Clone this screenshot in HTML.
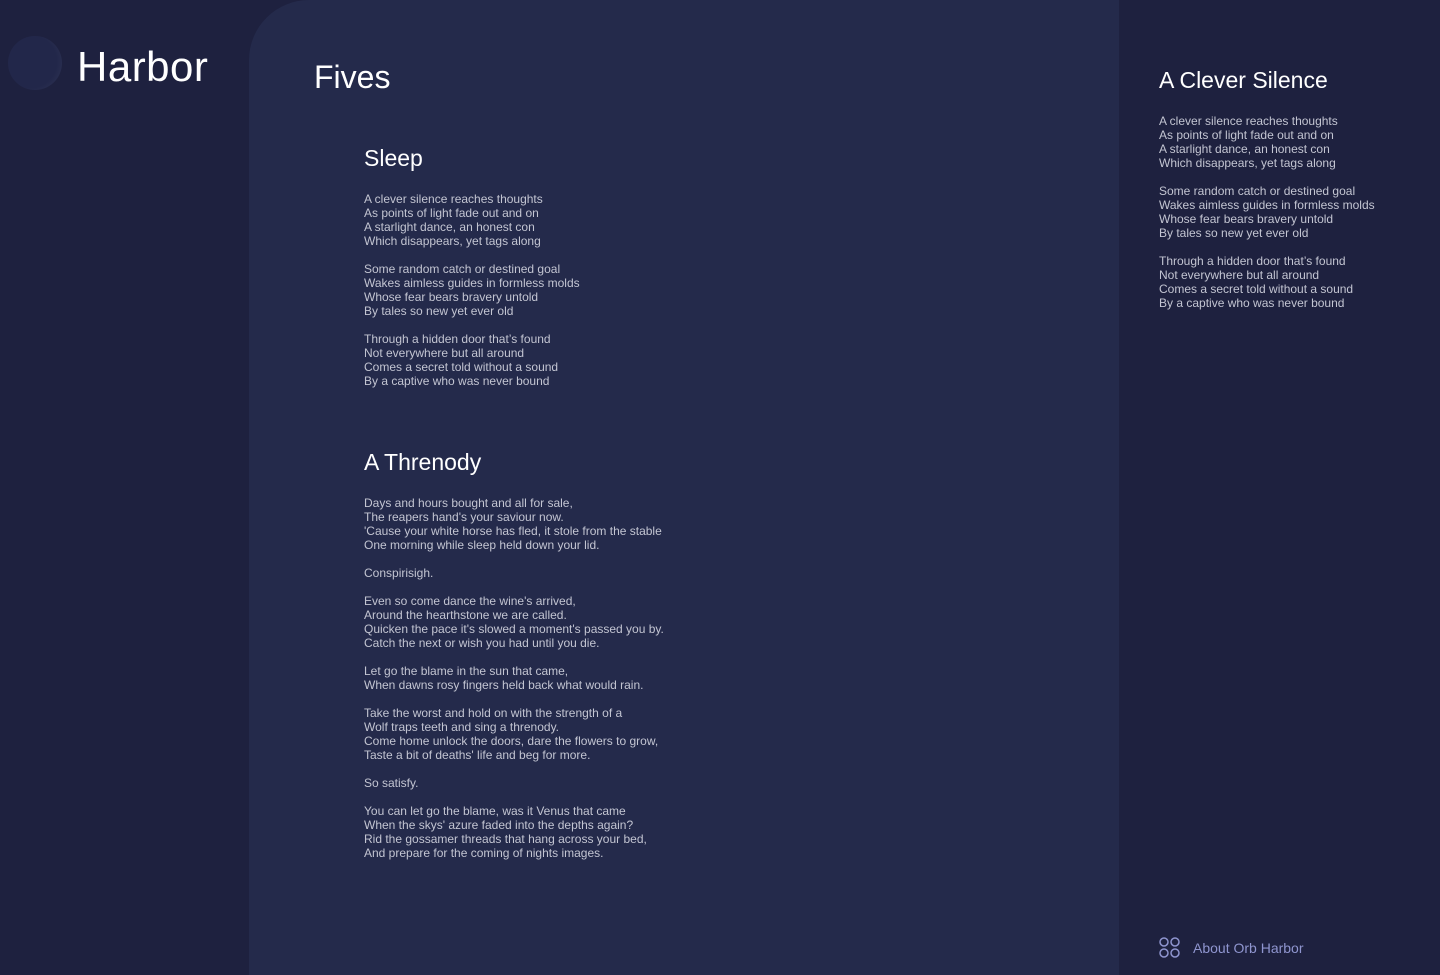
<!DOCTYPE html>
<html><head><meta charset="utf-8"><style>
*{margin:0;padding:0;box-sizing:border-box}
body{width:1440px;height:975px;background:#1e213f;font-family:"Liberation Sans",sans-serif;overflow:hidden;position:relative}
.logo{position:absolute;left:8px;top:36px;width:54px;height:54px;border-radius:50%;background:radial-gradient(circle at 42% 48%,#22274a 62%,#2c3152 84%,#4e5575 97%,#1e213f 100%)}
.brand{position:absolute;left:77px;top:43px;font-size:42px;color:#fff;letter-spacing:0.5px}
.main{position:absolute;left:249px;top:0;width:870px;height:975px;background:#242a4b;border-top-left-radius:60px}
h1{position:absolute;left:65px;top:59px;font-size:32px;font-weight:normal;color:#fff}
h2{font-size:23px;font-weight:normal;color:#fff}
p{font-size:12px;line-height:14px;color:#c3c5d2;margin-top:14px}
.poem{position:absolute;left:115px}
.poem h2{margin-bottom:20px}
.side{position:absolute;left:1159px;top:67px}
.about{position:absolute;left:1159px;top:937px;color:#8f95cf;font-size:14px;display:flex;align-items:center;gap:12px}
</style></head><body>
<div class="logo"></div>
<div class="brand">Harbor</div>
<div class="main">
<h1>Fives</h1>
<div class="poem" style="top:145px"><h2>Sleep</h2>
<p>A clever silence reaches thoughts<br>As points of light fade out and on<br>A starlight dance, an honest con<br>Which disappears, yet tags along</p>
<p>Some random catch or destined goal<br>Wakes aimless guides in formless molds<br>Whose fear bears bravery untold<br>By tales so new yet ever old</p>
<p>Through a hidden door that’s found<br>Not everywhere but all around<br>Comes a secret told without a sound<br>By a captive who was never bound</p></div>
<div class="poem" style="top:449px"><h2>A Threnody</h2>
<p>Days and hours bought and all for sale,<br>The reapers hand's your saviour now.<br>'Cause your white horse has fled, it stole from the stable<br>One morning while sleep held down your lid.</p>
<p>Conspirisigh.</p>
<p>Even so come dance the wine's arrived,<br>Around the hearthstone we are called.<br>Quicken the pace it's slowed a moment's passed you by.<br>Catch the next or wish you had until you die.</p>
<p>Let go the blame in the sun that came,<br>When dawns rosy fingers held back what would rain.</p>
<p>Take the worst and hold on with the strength of a<br>Wolf traps teeth and sing a threnody.<br>Come home unlock the doors, dare the flowers to grow,<br>Taste a bit of deaths' life and beg for more.</p>
<p>So satisfy.</p>
<p>You can let go the blame, was it Venus that came<br>When the skys' azure faded into the depths again?<br>Rid the gossamer threads that hang across your bed,<br>And prepare for the coming of nights images.</p></div>
</div>
<div class="side"><h2>A Clever Silence</h2>
<p style="margin-top:20px">A clever silence reaches thoughts<br>As points of light fade out and on<br>A starlight dance, an honest con<br>Which disappears, yet tags along</p>
<p>Some random catch or destined goal<br>Wakes aimless guides in formless molds<br>Whose fear bears bravery untold<br>By tales so new yet ever old</p>
<p>Through a hidden door that’s found<br>Not everywhere but all around<br>Comes a secret told without a sound<br>By a captive who was never bound</p></div>
<div class="about"><svg width="22" height="22" viewBox="0 0 22 22" fill="none" stroke="#8f95cf" stroke-width="1.5"><circle cx="5" cy="5" r="4"/><circle cx="16" cy="5" r="4"/><circle cx="5" cy="16" r="4"/><circle cx="16" cy="16" r="4"/></svg><span>About Orb Harbor</span></div>
</body></html>
